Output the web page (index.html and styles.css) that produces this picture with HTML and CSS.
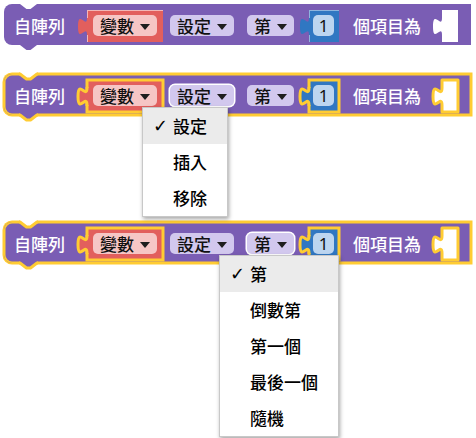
FILE: index.html
```html
<!DOCTYPE html>
<html lang="zh-Hant">
<head>
<meta charset="utf-8">
<link rel="stylesheet" href="styles.css">
</head>
<body>
<div class="canvas">

  <div class="block">
    <svg class="notch notch-top" width="21" height="10" viewBox="0 0 21 10"><polygon class="dip" points="2,0 19,0 19,2 12.5,7 8.5,7 2,2"/></svg>
    <span class="label">自陣列</span>
    <div class="sub sub-red">
      <svg class="tab" width="11" height="17" viewBox="0 0 11 17"><path class="tab-fill" d="M9,0 C9,11.33 0,-9.07 0,8.5 S9,5.67 9,17 L11,17 L11,0 Z"/></svg>
      <span class="field field-red">變數<i class="arrow"></i></span>
    </div>
    <span class="field field-purple gap-a">設定<i class="arrow"></i></span>
    <span class="field field-purple gap-b">第<i class="arrow"></i></span>
    <div class="sub sub-blue">
      <svg class="tab" width="11" height="17" viewBox="0 0 11 17"><path class="tab-fill" d="M9,0 C9,11.33 0,-9.07 0,8.5 S9,5.67 9,17 L11,17 L11,0 Z"/></svg>
      <span class="num">1</span>
    </div>
    <span class="label label-end">個項目為</span>
    <svg class="hole" width="25" height="32" viewBox="0 0 25 32"><path d="M9,0 L9,8 C9,19.33 0,-1.07 0,16.5 S9,13.67 9,25 L9,32 L25,32 L25,0 Z"/></svg>
    <svg class="notch notch-bottom" width="21" height="10" viewBox="0 0 21 10"><polygon class="tabfill" points="2,0 19,0 19,2 12.5,7 8.5,7 2,2"/></svg>
  </div>

  <div class="block selected second">
    <svg class="notch notch-top" width="21" height="10" viewBox="0 0 21 10"><polygon class="dip" points="2,0 19,0 19,2 12.5,7 8.5,7 2,2"/><polyline class="edge" points="1,2 2,2 8.5,7 12.5,7 19,2 20,2"/></svg>
    <span class="label">自陣列</span>
    <div class="sub sub-red">
      <svg class="tab" width="11" height="17" viewBox="0 0 11 17"><path class="tab-fill" d="M9,0 C9,11.33 0,-9.07 0,8.5 S9,5.67 9,17 L11,17 L11,0 Z"/><path class="tab-edge" d="M9,-1 L9,0 C9,11.33 0,-9.07 0,8.5 S9,5.67 9,17 L9,18"/></svg>
      <span class="field field-red">變數<i class="arrow"></i></span>
    </div>
    <span class="field field-purple gap-a open">設定<i class="arrow"></i>
      <span class="menu">
        <span class="item sel"><span class="check">✓</span>設定</span>
        <span class="item">插入</span>
        <span class="item">移除</span>
      </span>
    </span>
    <span class="field field-purple gap-b">第<i class="arrow"></i></span>
    <div class="sub sub-blue">
      <svg class="tab" width="11" height="17" viewBox="0 0 11 17"><path class="tab-fill" d="M9,0 C9,11.33 0,-9.07 0,8.5 S9,5.67 9,17 L11,17 L11,0 Z"/><path class="tab-edge" d="M9,-1 L9,0 C9,11.33 0,-9.07 0,8.5 S9,5.67 9,17 L9,18"/></svg>
      <span class="num">1</span>
    </div>
    <span class="label label-end">個項目為</span>
    <svg class="hole" width="25" height="32" viewBox="0 0 25 32"><path d="M9,0 L9,8 C9,19.33 0,-1.07 0,16.5 S9,13.67 9,25 L9,32 L25,32 L25,0 Z"/></svg>
    <svg class="notch notch-bottom" width="21" height="10" viewBox="0 0 21 10"><polygon class="tabfill" points="2,0 19,0 19,2 12.5,7 8.5,7 2,2"/><polyline class="edge" points="1,2 2,2 8.5,7 12.5,7 19,2 20,2"/></svg>
  </div>

  <div class="block selected third">
    <svg class="notch notch-top" width="21" height="10" viewBox="0 0 21 10"><polygon class="dip" points="2,0 19,0 19,2 12.5,7 8.5,7 2,2"/><polyline class="edge" points="1,2 2,2 8.5,7 12.5,7 19,2 20,2"/></svg>
    <span class="label">自陣列</span>
    <div class="sub sub-red">
      <svg class="tab" width="11" height="17" viewBox="0 0 11 17"><path class="tab-fill" d="M9,0 C9,11.33 0,-9.07 0,8.5 S9,5.67 9,17 L11,17 L11,0 Z"/><path class="tab-edge" d="M9,-1 L9,0 C9,11.33 0,-9.07 0,8.5 S9,5.67 9,17 L9,18"/></svg>
      <span class="field field-red">變數<i class="arrow"></i></span>
    </div>
    <span class="field field-purple gap-a">設定<i class="arrow"></i></span>
    <span class="field field-purple gap-b open">第<i class="arrow"></i>
      <span class="menu">
        <span class="item sel"><span class="check">✓</span>第</span>
        <span class="item">倒數第</span>
        <span class="item">第一個</span>
        <span class="item">最後一個</span>
        <span class="item">隨機</span>
      </span>
    </span>
    <div class="sub sub-blue">
      <svg class="tab" width="11" height="17" viewBox="0 0 11 17"><path class="tab-fill" d="M9,0 C9,11.33 0,-9.07 0,8.5 S9,5.67 9,17 L11,17 L11,0 Z"/><path class="tab-edge" d="M9,-1 L9,0 C9,11.33 0,-9.07 0,8.5 S9,5.67 9,17 L9,18"/></svg>
      <span class="num">1</span>
    </div>
    <span class="label label-end">個項目為</span>
    <svg class="hole" width="25" height="32" viewBox="0 0 25 32"><path d="M9,0 L9,8 C9,19.33 0,-1.07 0,16.5 S9,13.67 9,25 L9,32 L25,32 L25,0 Z"/></svg>
    <svg class="notch notch-bottom" width="21" height="10" viewBox="0 0 21 10"><polygon class="tabfill" points="2,0 19,0 19,2 12.5,7 8.5,7 2,2"/><polyline class="edge" points="1,2 2,2 8.5,7 12.5,7 19,2 20,2"/></svg>
  </div>

</div>
</body>
</html>
```

FILE: styles.css
```css
* { box-sizing: border-box; }

html, body {
  height: 100%;
}

body {
  margin: 0;
  background: #ffffff;
  font-family: "Noto Sans CJK TC", "Noto Sans", sans-serif;
}

.canvas {
  display: flex;
  flex-direction: column;
  align-items: flex-start;
  min-height: 438px;
  padding: 4px 0 0 4px;
}

.block {
  position: relative;
  display: flex;
  align-items: center;
  height: 41px;
  padding: 2px 13px 0 10px;
  background: #7a5db4;
  border-radius: 8px 0 0 8px;
}

.block.second { margin-top: 29px; z-index: 2; }
.block.third { margin-top: 107px; z-index: 1; }

.block.selected {
  box-shadow: 0 0 0 1.5px #ffcc33, inset 0 0 0 1.5px #ffcc33;
}

.notch {
  position: absolute;
  left: 14px;
  overflow: visible;
}
.notch-top { top: -2px; }
.notch-bottom { bottom: -8px; }
.notch .dip { fill: #ffffff; }
.notch .tabfill { fill: #7a5db4; }
.notch .edge {
  fill: none;
  stroke: #ffcc33;
  stroke-width: 3;
  stroke-linejoin: round;
}

.label {
  color: #ffffff;
  font-size: 17px;
  font-weight: 500;
  line-height: 21px;
  white-space: nowrap;
}
.label-end { margin-left: 14px; }

.sub {
  position: relative;
  display: flex;
  align-items: center;
  height: 32px;
}
.sub-red {
  margin-left: 22px;
  padding: 0 6px;
  background: #e25f5d;
  box-shadow: inset 1px 1px 0 rgba(255, 255, 255, 0.55);
}
.sub-blue {
  margin-left: 15px;
  padding: 0 5px 0 4px;
  background: #3077c2;
  box-shadow: inset 1px 1px 0 rgba(255, 255, 255, 0.45);
}
.selected .sub {
  box-shadow: 0 0 0 1.5px #ffcc33, inset 0 0 0 1.5px #ffcc33;
}

.tab {
  position: absolute;
  left: -9px;
  top: 8px;
  overflow: visible;
}
.sub-red .tab-fill { fill: #e25f5d; }
.sub-blue .tab-fill { fill: #3077c2; }
.tab-edge {
  fill: none;
  stroke: #ffcc33;
  stroke-width: 3;
}

.field {
  position: relative;
  display: inline-flex;
  align-items: center;
  gap: 6px;
  height: 21px;
  padding: 0 7px;
  border-radius: 5px;
  font-size: 17px;
  font-weight: 500;
  line-height: 21px;
  color: #111111;
  white-space: nowrap;
}
.field-red { background: #f6c6c5; }
.field-purple { background: #d2c8ee; }
.gap-a { margin-left: 7px; }
.gap-b { margin-left: 13px; }
.field.open { box-shadow: 0 0 0 1.5px #ffffff; }

.arrow {
  width: 0;
  height: 0;
  border-left: 5px solid transparent;
  border-right: 5px solid transparent;
  border-top: 6px solid #1e1e1e;
  margin-top: 2px;
}

.num {
  width: 21px;
  height: 21px;
  border-radius: 5px;
  background: #bcd5f0;
  color: #111111;
  font-family: "Noto Sans", sans-serif;
  font-size: 17px;
  line-height: 21px;
  text-align: center;
}

.hole {
  margin-left: 12px;
  overflow: visible;
}
.hole path { fill: #ffffff; }
.selected .hole path {
  stroke: #ffcc33;
  stroke-width: 3;
  stroke-linejoin: round;
}

.menu {
  position: absolute;
  left: -28px;
  top: calc(100% + 1px);
  z-index: 10;
  display: flex;
  flex-direction: column;
  background: #ffffff;
  border: 1px solid #c8c8c8;
  box-shadow: 1px 2px 4px rgba(0, 0, 0, 0.35);
  font-weight: 500;
}

.item {
  position: relative;
  display: block;
  height: 36px;
  padding: 0 20px 0 30px;
  font-size: 17px;
  line-height: 36px;
  color: #000000;
  white-space: nowrap;
}
.item.sel { background: #ebebeb; }

.check {
  position: absolute;
  left: 10px;
  top: 0;
  font-family: "DejaVu Sans", sans-serif;
  font-size: 18px;
  font-weight: normal;
  line-height: 36px;
}
```
